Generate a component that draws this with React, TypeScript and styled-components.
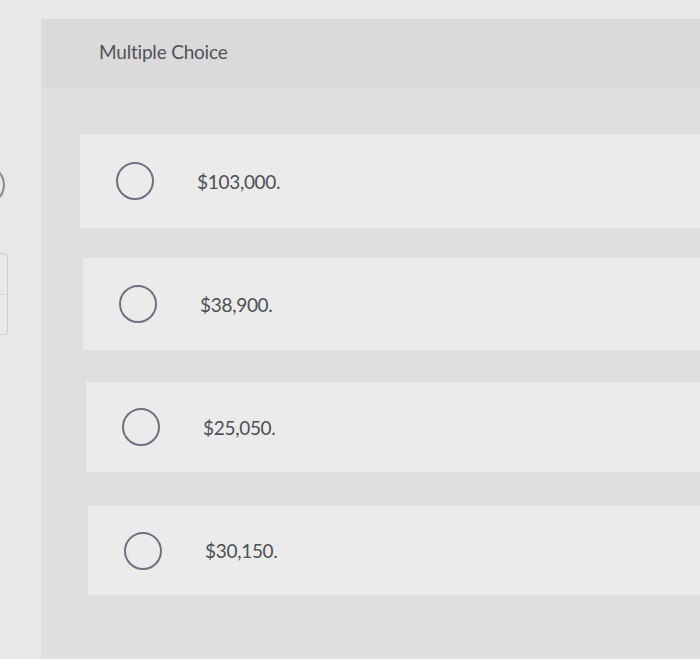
import styled, { createGlobalStyle } from "styled-components";

const GlobalStyle = createGlobalStyle`
  html, body {
    margin: 0;
    padding: 0;
    background: #e8e8e7;
    font-family: "Lato", "Open Sans", sans-serif;
  }
`;

interface IRow {
  shift: number;
  rowHeight: number;
}

const choices = [
  { label: "$103,000.", shift: 0, rowHeight: 94 },
  { label: "$38,900.", shift: 3, rowHeight: 92 },
  { label: "$25,050.", shift: 6, rowHeight: 90 },
  { label: "$30,150.", shift: 8, rowHeight: 89 },
];

export default function App() {
  return (
    <>
      <GlobalStyle />
      <Page>
        <SideRail>
          <RailPill />
          <RailBox>
            <RailDivider />
          </RailBox>
        </SideRail>
        <Panel>
          <PanelHeader>Multiple Choice</PanelHeader>
          <ChoiceList>
            {choices.map((c) => (
              <ChoiceRow key={c.label} shift={c.shift} rowHeight={c.rowHeight}>
                <Radio />
                <ChoiceLabel>{c.label}</ChoiceLabel>
              </ChoiceRow>
            ))}
          </ChoiceList>
        </Panel>
      </Page>
    </>
  );
}

const Page = styled.div`
  display: flex;
  height: 659px;
  overflow: hidden;
  padding-top: 19px;
  box-sizing: border-box;
`;

const SideRail = styled.div`
  width: 41px;
  flex-shrink: 0;
  overflow: hidden;
  display: flex;
  flex-direction: column;
  padding-top: 146px;
`;

const RailPill = styled.div`
  width: 40px;
  height: 40px;
  margin-left: -35px;
  border: 2px solid #8a8c92;
  border-radius: 50%;
  box-sizing: border-box;
`;

const RailBox = styled.div`
  width: 40px;
  height: 82px;
  margin-left: -32px;
  margin-top: 48px;
  border: 1px solid #cfcfcf;
  border-radius: 3px;
  box-sizing: border-box;
  display: flex;
  flex-direction: column;
  justify-content: center;
`;

const RailDivider = styled.div`
  height: 1px;
  background: #d6d6d6;
`;

const Panel = styled.div`
  flex: 1;
  background: #dfdfdf;
  display: flex;
  flex-direction: column;
`;

const PanelHeader = styled.div`
  height: 69px;
  box-sizing: border-box;
  padding: 0 0 4px 58px;
  background: #dadada;
  display: flex;
  align-items: center;
  font-size: 19px;
  color: #505258;
  letter-spacing: -0.2px;
`;

const ChoiceList = styled.div`
  display: grid;
  grid-auto-rows: 124px;
  align-items: start;
  padding: 46px 0 0 39px;
`;

const ChoiceRow = styled.div<IRow>`
  height: ${(props) => props.rowHeight}px;
  margin-left: ${(props) => props.shift}px;
  background: #ebebeb;
  display: flex;
  align-items: center;
  padding-left: 36px;
`;

const Radio = styled.div`
  width: 38px;
  height: 38px;
  border: 2px solid #6e7181;
  border-radius: 50%;
  box-sizing: border-box;
  flex-shrink: 0;
`;

const ChoiceLabel = styled.span`
  margin-left: 43px;
  font-size: 19px;
  color: #4e5056;
  letter-spacing: -0.3px;
`;
